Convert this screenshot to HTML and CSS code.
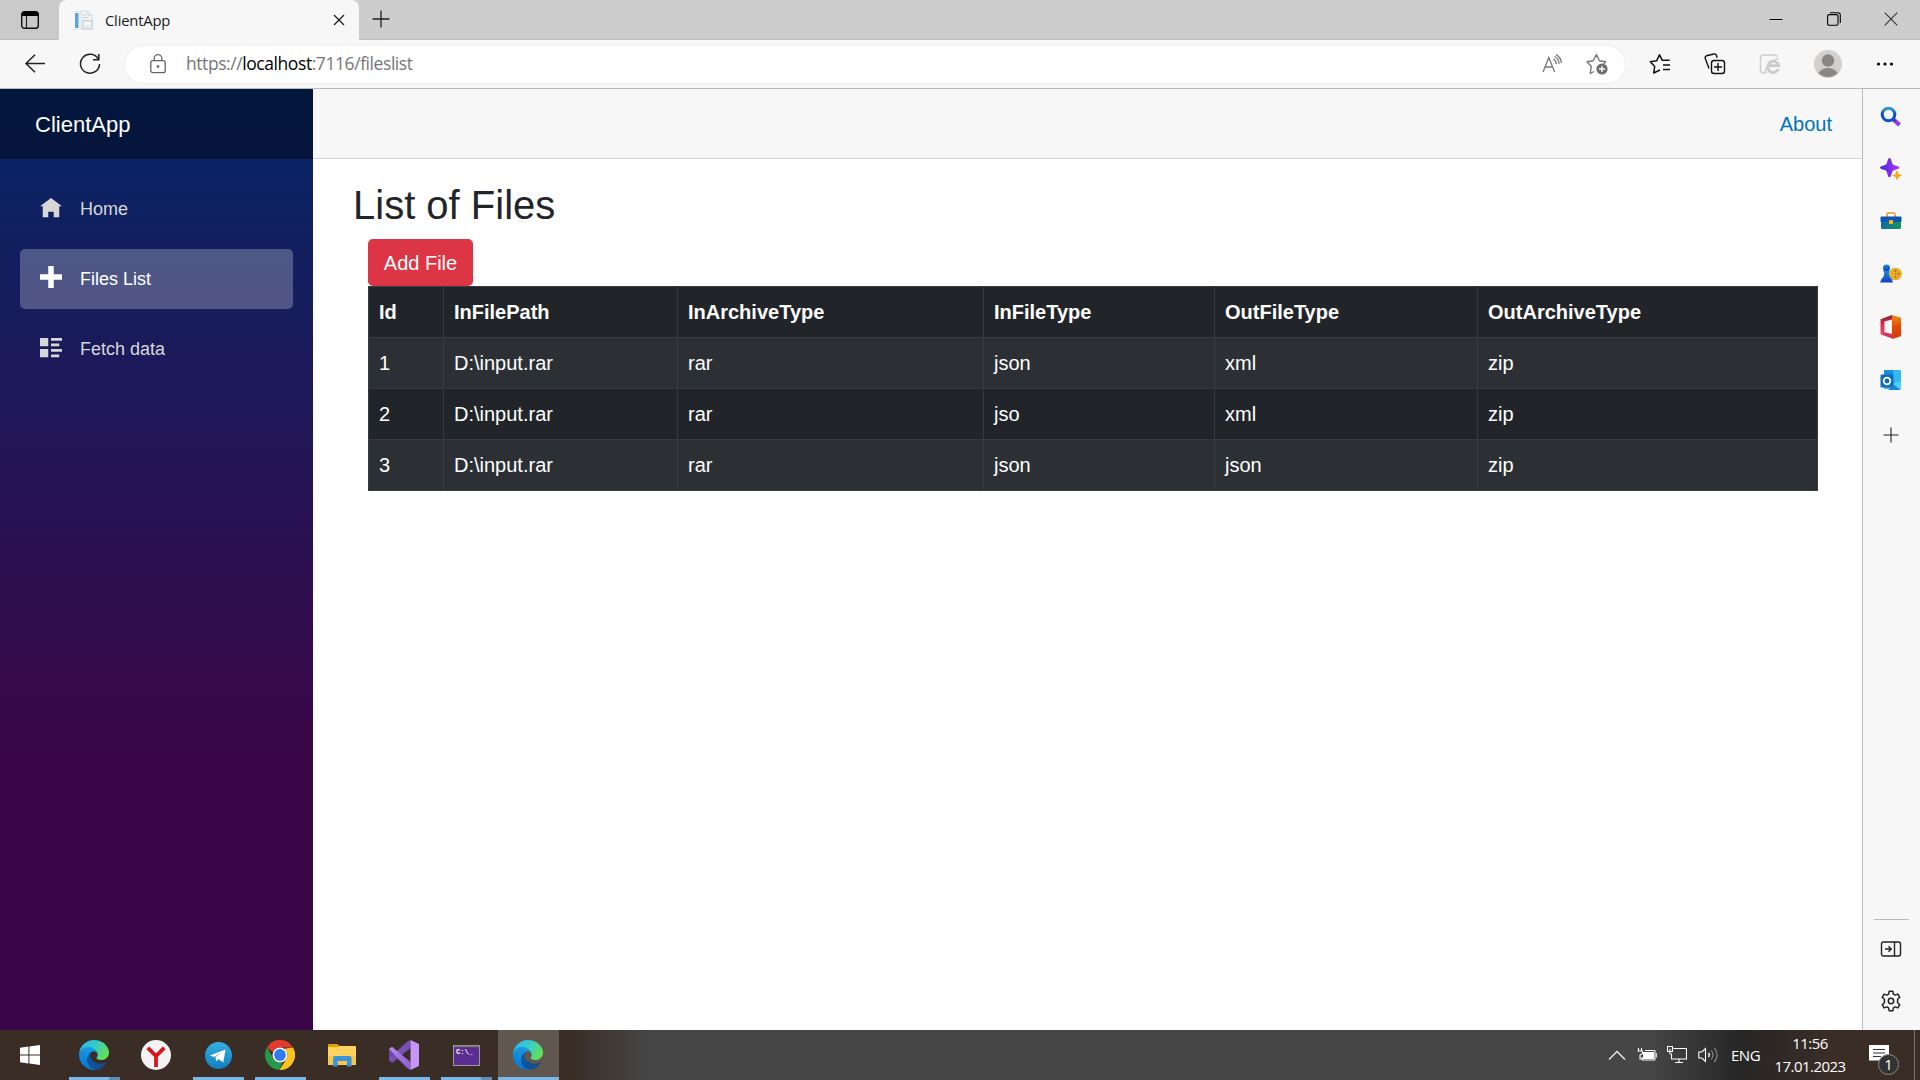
FILE: index.html
```html
<!DOCTYPE html>
<html lang="en">
<head>
<meta charset="utf-8">
<title>ClientApp</title>
<link rel="stylesheet" href="styles.css">
</head>
<body>
<svg class="defs" width="0" height="0" aria-hidden="true">
  <defs>
    <linearGradient id="edge-a" x1="0" y1="0" x2="1" y2="0"><stop offset="0" stop-color="#0c59a4"/><stop offset="1" stop-color="#114a8b"/></linearGradient>
    <linearGradient id="edge-b" x1=".6" y1="0" x2=".3" y2="1"><stop offset="0" stop-color="#1b9de2"/><stop offset=".5" stop-color="#1389d8"/><stop offset="1" stop-color="#0078d4"/></linearGradient>
    <linearGradient id="edge-c" x1="0" y1=".2" x2="1" y2=".6"><stop offset="0" stop-color="#2fb4ee"/><stop offset=".5" stop-color="#36cdc8"/><stop offset="1" stop-color="#66e04e"/></linearGradient>
    <linearGradient id="glass" x1="0" y1="0" x2="0" y2="1"><stop offset="0" stop-color="#2a9bd6"/><stop offset=".5" stop-color="#0b4cc4"/><stop offset="1" stop-color="#0a52d8"/></linearGradient>
    <linearGradient id="spark" x1="0" y1="0" x2="1" y2="0"><stop offset="0" stop-color="#3a36d8"/><stop offset=".6" stop-color="#8a2df0"/><stop offset="1" stop-color="#b03cf5"/></linearGradient>
    <linearGradient id="box" x1="0" y1="0" x2="1" y2="0"><stop offset="0" stop-color="#0d6aa8"/><stop offset="1" stop-color="#16965c"/></linearGradient>
    <linearGradient id="pawn" x1="0" y1="0" x2="0" y2="1"><stop offset="0" stop-color="#1c8ad0"/><stop offset="1" stop-color="#1141c4"/></linearGradient>
    <linearGradient id="office-l" x1="0" y1="0" x2="0" y2="1"><stop offset="0" stop-color="#8a1f2e"/><stop offset=".5" stop-color="#d9305a"/><stop offset="1" stop-color="#f0456a"/></linearGradient>
    <linearGradient id="office-r" x1="0" y1="0" x2="0" y2="1"><stop offset="0" stop-color="#f0910a"/><stop offset=".5" stop-color="#e04a08"/><stop offset="1" stop-color="#d43a06"/></linearGradient>
    <linearGradient id="tg" x1="0" y1="0" x2="0" y2="1"><stop offset="0" stop-color="#37aee2"/><stop offset="1" stop-color="#0f80c0"/></linearGradient>
    <linearGradient id="vs" x1="0" y1="0" x2="1" y2="0"><stop offset="0" stop-color="#b98be8"/><stop offset="1" stop-color="#8b5fd0"/></linearGradient>
    <symbol id="edge" viewBox="0 0 256 256">
      <g transform="translate(-4.63 -4.92)">
        <path fill="url(#edge-a)" d="M235.68 195.46a93.73 93.73 0 0 1-10.54 4.71 101.87 101.87 0 0 1-35.9 6.46c-47.32 0-88.54-32.55-88.54-74.32A31.48 31.48 0 0 1 117.13 105c-42.8 1.8-53.8 46.4-53.8 72.53 0 73.88 68.09 81.37 82.76 81.37 7.91 0 19.84-2.3 27-4.56l1.31-.44a128.34 128.34 0 0 0 66.6-52.8 4 4 0 0 0-5.32-5.64z"/>
        <path fill="url(#edge-b)" d="M110.34 246.34A79.2 79.2 0 0 1 87.6 225a80.72 80.72 0 0 1 29.53-120c3.12-1.47 8.45-4.05 15.54-4a32.35 32.35 0 0 1 25.69 13 31.88 31.88 0 0 1 6.36 18.66c0-.21 24.46-79.6-80-79.6-43.9 0-80 41.66-80 78.21a130.15 130.15 0 0 0 12.11 56 128 128 0 0 0 156.38 67.11 75.55 75.55 0 0 1-62.78-8z"/>
        <path fill="url(#edge-c)" d="M156.94 153.78c-.81 1.05-3.3 2.5-3.3 5.66 0 2.61 1.7 5.12 4.72 7.23 14.38 10 41.49 8.68 41.56 8.68a59.56 59.56 0 0 0 30.27-8.35 61.38 61.38 0 0 0 30.43-52.88c.26-22.41-8-37.31-11.34-43.91C228.09 28.76 182.35 4.92 132.61 4.92a128 128 0 0 0-128 126.2c.48-36.54 36.8-66.05 80-66.05 3.5 0 23.46.34 42 10.07 16.34 8.58 24.9 18.94 30.85 29.21 6.18 10.67 7.28 24.15 7.28 29.52s-2.74 13.33-7.8 19.91z"/>
      </g>
    </symbol>
  </defs>
</svg>

<div class="screen">
  <header class="tabstrip">
    <button class="tab-actions" aria-label="Tab actions">
      <svg width="20" height="20" viewBox="0 0 20 20"><rect x="1.7" y="1.7" width="16.6" height="16.6" rx="2.8" fill="none" stroke="#111" stroke-width="1.4"/><path d="M1.5 6V4.2A3 3 0 0 1 4.5 1.300h11a3 3 0 0 1 3 3V6z" fill="#000"/><path d="M6.500 6v12" stroke="#222" stroke-width="1.2"/></svg>
    </button>
    <div class="tab">
      <svg class="favicon" width="21" height="21" viewBox="0 0 21 21"><rect x="2" y="3" width="3.500" height="15" fill="#5ba5d8"/><path d="M0.500 1.500h5M.5 19.500h5" stroke="#d7e4ec"/><path d="M7 1h8l4 3.500V19H7z" fill="#f1f3f5" stroke="#d8dde1"/><path d="M15 1v4h4" fill="#fff" stroke="#c4ccd2"/><path d="M8.500 5h5M8.500 7.500h7" stroke="#cdd5da"/><rect x="9.500" y="10.500" width="10" height="8.500" fill="#e4e9ec" stroke="#c8d0d6"/><path d="M11 13.500h7" stroke="#f8fafb" stroke-width="2"/></svg>
      <span class="tab-title">ClientApp</span>
      <svg class="tab-close" width="12" height="12" viewBox="0 0 12 12"><path d="M1 1l10 10M11 1L1 11" stroke="#222" stroke-width="1.400"/></svg>
    </div>
    <svg class="new-tab" width="18" height="18" viewBox="0 0 18 18"><path d="M9 .5v17M.5 9h17" stroke="#222" stroke-width="1.300"/></svg>
    <div class="window-controls">
      <svg width="14" height="14" viewBox="0 0 14 14"><path d="M.5 7.500h13" stroke="#000"/></svg>
      <svg width="14" height="14" viewBox="0 0 14 14"><rect x=".6" y="2.600" width="10.400" height="10.600" rx="1.500" fill="none" stroke="#000" stroke-width="1.100"/><path d="M3 .7h8a2.300 2.300 0 0 1 2.300 2.300v8" fill="none" stroke="#000" stroke-width="1.100"/></svg>
      <svg width="14" height="14" viewBox="0 0 14 14"><path d="M.7.7l12.600 12.600M13.300.7L.7 13.300" stroke="#333" stroke-width="1.100"/></svg>
    </div>
  </header>

  <div class="toolbar">
    <svg class="back" width="22" height="20" viewBox="0 0 22 20"><path d="M21 9.500H2M11 .8L2 9.500l9 8.700" fill="none" stroke="#222" stroke-width="1.500"/></svg>
    <svg class="reload" width="22" height="22" viewBox="0 0 22 22"><path d="M19.500 6.500A9.500 9.500 0 1 0 20.500 11M19.800 1v5.800H14" fill="none" stroke="#222" stroke-width="1.500"/></svg>
    <div class="address">
      <svg class="lock" width="16" height="20" viewBox="0 0 16 20"><rect x=".8" y="6.700" width="14.400" height="12" rx="2" fill="none" stroke="#666" stroke-width="1.300"/><path d="M4.200 6.700V4.500a3.800 3.800 0 0 1 7.600 0v2.200" fill="none" stroke="#666" stroke-width="1.300"/><circle cx="8" cy="12.500" r="1.300" fill="#555"/></svg>
      <span class="url">https://<b>localhost</b>:7116/fileslist</span>
      <svg class="read" width="20" height="20" viewBox="0 0 20 20" fill="none" stroke="#777" stroke-width="1.300"><path d="M1 18L6.800 3.500 12.600 18M3 13h7.600M11.500 5a6 6 0 0 1 2.800 5M12.500 2.500A8 8 0 0 1 17 10M14 .6A10 10 0 0 1 19.300 9"/></svg>
      <svg class="fav" width="24" height="22" viewBox="0 0 24 22"><path d="M8 18.500l-3.800 2L5.300 13.200.9 8.800l6.300-1L10.400 1.600l3 6.200 6.200 1-2 2.200" fill="none" stroke="#777" stroke-width="1.400" stroke-linejoin="round"/><circle cx="16" cy="16" r="5.600" fill="#6f6f6f"/><path d="M16 13v6M13 16h6" stroke="#fff" stroke-width="1.300"/></svg>
    </div>
    <div class="tools">
      <svg width="22" height="22" viewBox="0 0 22 22" fill="none" stroke="#111" stroke-width="1.500" stroke-linejoin="round"><path d="M11 17l-6.300 3L5.700 13.500 1.300 8.800l6.300-1L10.500 1.800l2.800 5.500h7.400M14 12h7M14 16.500h7"/></svg>
      <svg width="22" height="22" viewBox="0 0 22 22" fill="none" stroke="#111" stroke-width="1.400" stroke-linejoin="round"><rect x="7.500" y="7.500" width="13" height="13" rx="2.500"/><path d="M14 10v8M10 14h8M5 15.500L1.200 5.200a2 2 0 0 1 1.200-2.400L10 1a2 2 0 0 1 2.400 1.300l.8 2.400"/></svg>
      <svg width="22" height="22" viewBox="0 0 22 22"><path d="M6 20H4a2.500 2.500 0 0 1-2.500-2.500v-13A2.500 2.500 0 0 1 4 2h12a2.500 2.500 0 0 1 2.500 2" fill="none" stroke="#d0d0d0" stroke-width="1.500"/><path d="M19.500 16a5.600 5.600 0 1 1 .3-3.300H9.500" fill="none" stroke="#cbcbcb" stroke-width="2.800"/><path d="M8 19.500c-2 .8-2.500-1 0-5 3-5 9-9 11.500-8.500" fill="none" stroke="#d0d0d0" stroke-width="1.500"/></svg>
      <svg width="28" height="28" viewBox="0 0 28 28"><clipPath id="av"><circle cx="14" cy="14" r="13"/></clipPath><circle cx="14" cy="14" r="14" fill="#d2d0ce"/><circle cx="14" cy="10.500" r="6.200" fill="#8a8683"/><ellipse cx="14" cy="26" rx="10" ry="8" fill="#8a8683" clip-path="url(#av)"/></svg>
      <svg width="18" height="6" viewBox="0 0 18 6"><circle cx="2.500" cy="3" r="1.600"/><circle cx="9" cy="3" r="1.600"/><circle cx="15.500" cy="3" r="1.600"/></svg>
    </div>
  </div>

  <div class="viewport">
    <div class="page">
      <aside class="sidebar">
        <div class="brand">ClientApp</div>
        <nav class="nav">
          <a class="nav-item"><svg width="22" height="22" viewBox="0 0 8 8"><path fill="currentColor" d="M4 0L0 3h1v4h2V5h2v2h2V3.010l1 0z"/></svg>Home</a>
          <a class="nav-item active"><svg class="plus" width="22" height="22" viewBox="0 0 8 8"><path fill="currentColor" d="M3 0v3H0v2h3v3h2V5h3V3H5V0z"/></svg>Files List</a>
          <a class="nav-item"><svg width="22" height="22" viewBox="0 0 8 8"><path fill="currentColor" d="M0 0v3h3V0zM4 0v1h4V0zM4 2v1h3V2zM0 4v3h3V4zM4 4v1h4V4zM4 6v1h3V6z"/></svg>Fetch data</a>
        </nav>
      </aside>
      <main class="main">
        <div class="top-row"><a>About</a></div>
        <article class="content">
          <h1>List of Files</h1>
          <div class="files">
            <button class="btn">Add File</button>
            <table class="table">
              <colgroup><col class="c1"><col class="c2"><col class="c3"><col class="c4"><col class="c5"><col class="c6"></colgroup>
              <thead><tr><th>Id</th><th>InFilePath</th><th>InArchiveType</th><th>InFileType</th><th>OutFileType</th><th>OutArchiveType</th></tr></thead>
              <tbody>
                <tr><td>1</td><td>D:\input.rar</td><td>rar</td><td>json</td><td>xml</td><td>zip</td></tr>
                <tr><td>2</td><td>D:\input.rar</td><td>rar</td><td>jso</td><td>xml</td><td>zip</td></tr>
                <tr><td>3</td><td>D:\input.rar</td><td>rar</td><td>json</td><td>json</td><td>zip</td></tr>
              </tbody>
            </table>
          </div>
        </article>
      </main>
    </div>
    <aside class="edgebar">
      <div class="edge-icons">
        <svg width="22" height="22" viewBox="0 0 22 22"><path d="M13.500 13.500l6 5.500" stroke="#8a3df0" stroke-width="4.200"/><path d="M13 13l2.500 2.200" stroke="#5a3a8a" stroke-width="3"/><circle cx="8.500" cy="8.500" r="6.300" fill="#f0f7ff" stroke="url(#glass)" stroke-width="3"/></svg>
        <svg width="22" height="22" viewBox="0 0 22 22"><path d="M9.500 0c1.200 0 1.600 1.500 2.300 4 .6 2.300 1.200 2.800 3.500 3.400 2.800.8 4.200 1.200 4.200 2.200s-1.500 1.500-4.200 2.200c-2.300.6-2.900 1.200-3.500 3.400-.7 2.700-1.100 4-2.300 4s-1.600-1.300-2.300-4c-.6-2.200-1.200-2.800-3.500-3.400C1 11 0 10.600 0 9.600s1-1.400 3.700-2.200C6 6.800 6.600 6.300 7.200 4c.7-2.500 1.100-4 2.300-4z" fill="url(#spark)"/><path d="M17 12.500c.9 0 .9 2.600 1.700 3.500.8.800 3.100.5 3.100 1.500s-2.300.7-3.100 1.500c-.8.900-.8 3-1.700 3s-.9-2.100-1.700-3c-.8-.8-3-.5-3-1.500s2.200-.7 3-1.500c.8-.9.8-3.500 1.700-3.500z" fill="#f0ac12"/></svg>
        <svg width="22" height="22" viewBox="0 0 22 22"><path d="M7 7V4.500A1.500 1.500 0 0 1 8.500 3h5A1.500 1.500 0 0 1 15 4.500V7" fill="none" stroke="#e0a020" stroke-width="1.600"/><rect x="1" y="8" width="20" height="11" rx="1.500" fill="url(#box)"/><rect x=".5" y="6.500" width="21" height="5.500" rx="1" fill="#0e55b4"/><rect x="9" y="10" width="4" height="4" rx=".8" fill="#ffb81c"/></svg>
        <svg width="22" height="22" viewBox="0 0 22 22"><circle cx="15.500" cy="11" r="6.300" fill="#e9ab2c"/><g fill="#a66c08"><circle cx="15.500" cy="8" r="1"/><circle cx="18.500" cy="11" r="1"/><circle cx="15.500" cy="14" r="1"/><circle cx="15.500" cy="11" r=".8"/></g><circle cx="6.500" cy="5" r="3.500" fill="url(#pawn)"/><path d="M3 8h7l-1 1.500c0 3 .8 5 2.700 6.500l1.300 3.500H0L1.500 16c2-1.500 2.700-3.500 2.700-6.500z" fill="url(#pawn)"/></svg>
        <svg width="22" height="24" viewBox="0 0 22 24"><path d="M12 0L.5 4.200v15l4-1.700V6.500L13 4.200z" fill="url(#office-l)"/><path d="M.5 19.200l4-2 8.500 2v4.600z" fill="#d9305a"/><path d="M12 0l9 2.700v18.500L12 24V0z" fill="url(#office-r)"/></svg>
        <svg width="22" height="22" viewBox="0 0 22 22"><rect x="4" y="1" width="17" height="19" rx="1" fill="#35b8f1"/><path d="M4 1h9v5H4z" fill="#1490df"/><path d="M8 21l13-9v7a2 2 0 0 1-2 2z" fill="#1687d6"/><path d="M13 15l8 6V12z" fill="#50d0ff"/><rect x=".5" y="5.500" width="13" height="13" rx="1.200" fill="#0f6cbd"/><circle cx="7" cy="12" r="3.300" fill="none" stroke="#fff" stroke-width="1.800"/></svg>
        <svg width="16" height="16" viewBox="0 0 16 16"><path d="M8 .5v15M.5 8h15" stroke="#222" stroke-width="1.100"/></svg>
      </div>
      <div class="edge-foot">
        <svg width="22" height="18" viewBox="0 0 22 18"><rect x="1.500" y="2" width="19" height="14" rx="2" fill="none" stroke="#222" stroke-width="1.400"/><path d="M14.500 2v14M5 9h6M8.500 6.300L11.200 9l-2.700 2.700" fill="none" stroke="#222" stroke-width="1.400"/></svg>
        <svg width="22" height="22" viewBox="0 0 22 22" fill="none" stroke="#222" stroke-width="1.500" stroke-linejoin="round"><circle cx="11" cy="11" r="2.700"/><path d="M9.200 1.200h3.600l.6 2.900 1.700 1 2.800-1 1.900 3.200-2.200 2v3.400l2.200 2-1.900 3.200-2.800-1-1.700 1-.6 2.900H9.200l-.6-2.900-1.700-1-2.800 1-1.900-3.200 2.200-2V9.300l-2.200-2 1.900-3.200 2.800 1 1.700-1z"/></svg>
      </div>
    </aside>
  </div>

  <footer class="taskbar">
    <div class="start"><svg width="20" height="20" viewBox="0 0 20 20"><path fill="#fff" d="M0 2.700L8.400 1.500v8H0zM9.400 1.400L20 0v9.500H9.400zM0 10.500h8.400v8L0 17.300zM9.400 10.500H20V20L9.400 18.600z"/></svg></div>
    <div class="app run multi"><svg width="30" height="30"><use href="#edge"/></svg></div>
    <div class="app"><svg width="30" height="30" viewBox="0 0 30 30"><circle cx="15" cy="15" r="15" fill="#f3f3f3"/><path d="M6.800 7.800L15 16l8.200-8.200M15 15v12" fill="none" stroke="#d8141c" stroke-width="3.800"/></svg></div>
    <div class="app run"><svg width="27" height="27" viewBox="0 0 27 27"><circle cx="13.500" cy="13.500" r="13.500" fill="url(#tg)"/><path d="M5 13.600L20.500 7.500 18.300 20.500 13.500 17l-2.300 2.500-.8-4.500 6.600-5-8 5z" fill="#fff"/></svg></div>
    <div class="app run"><svg width="30" height="30" viewBox="0 0 30 30"><path d="M2 7.500a15 15 0 0 1 26 0H15a7.500 7.500 0 0 0-7 4.700z" fill="#e33b2e"/><path d="M28 7.500A15 15 0 0 1 14.500 30l7-11.200A7.500 7.500 0 0 0 19 8.700L28 7.500z" fill="#fcc31e"/><path d="M2 7.500l6.500 11.250a7.500 7.500 0 0 0 9 3.400L14.500 30A15 15 0 0 1 2 7.500z" fill="#259b48"/><circle cx="15" cy="15" r="7.500" fill="#fff"/><circle cx="15" cy="15" r="5.900" fill="#2f7bee"/></svg></div>
    <div class="app"><svg width="30" height="24" viewBox="0 0 30 24"><path d="M1 2a1 1 0 0 1 1-1h8l3 2v4H1z" fill="#e3a008"/><path d="M1 4h9.500L13 3h15a1 1 0 0 1 1 1v18H1z" fill="#ffd35c"/><path d="M1 13h28v8.500H1z" fill="#fbc744"/><path d="M6 23.500V15a2 2 0 0 1 2-2h14.500a2 2 0 0 1 2 2v8.500H20V18h-9.300v5.500z" fill="#3a94d8"/></svg></div>
    <div class="app run"><svg width="30" height="30" viewBox="0 0 30 30"><path d="M0 9.500L3 7l18.500 16v7l-3-1.500L3.500 14v7.500L0 20z" fill="#6b46ad"/><path d="M0 20l3 3L21.500 8V0l-3 1.500L0 18z" fill="#7650b4"/><path d="M3 6.800L0 9l18.500 18.800L21.500 30V22z" fill="url(#vs)"/><path d="M21.500 0L30 4v22l-8.500 4z" fill="#c794fa"/></svg></div>
    <div class="app run multi"><svg width="27" height="21" viewBox="0 0 27 21"><rect x=".5" y=".5" width="26" height="20" fill="#5c2d91" stroke="#999" /><path d="M1 1.500h25" stroke="#777" stroke-width="1.500"/><text x="3" y="9" class="prompt">C:\_</text></svg></div>
    <div class="app run current"><svg width="30" height="30"><use href="#edge"/></svg></div>

    <div class="tray">
      <svg width="18" height="12" viewBox="0 0 18 12"><path d="M1 10.500l8-8 8 8" fill="none" stroke="#eee" stroke-width="1.400"/></svg>
      <svg width="20" height="16" viewBox="0 0 20 16"><path d="M1.500 1v3M4.500 1v3M.5 4h5v2.500L3 8v4h3" fill="none" stroke="#fff" stroke-width="1.100"/><path d="M8 3.500h10v9.500H5v-3" fill="none" stroke="#fff"/><rect x="6" y="5" width="11" height="7" fill="#fff"/><path d="M19.300 6v4.500" stroke="#fff"/></svg>
      <svg width="20" height="18" viewBox="0 0 20 18"><path d="M6.500 2.500h13v10.500h-15V7.500M12 13v3M8 16.500h8M.5.5h5v5h-5zM3 3v5.500" fill="none" stroke="#fff" stroke-width="1.100"/></svg>
      <svg width="21" height="20" viewBox="0 0 21 20" fill="none"><path d="M.8 7h3L7.500 3.500v13L3.800 13h-3z" stroke="#fff" stroke-width="1.100"/><path d="M10.500 7.800c1 1.300 1 3 0 4.400" stroke="#fff" stroke-width="1.300"/><path d="M13.300 5.500c2.300 3 2.300 6 0 9M16.300 2.800c3.500 4.500 3.500 9.800 0 14.300" stroke="#858585" stroke-width="1.200"/></svg>
      <span class="lang">ENG</span>
      <div class="clock"><span>11:56</span><span>17.01.2023</span></div>
      <div class="notice">
        <svg width="20" height="20" viewBox="0 0 20 20"><path d="M0 0h20v15.500h-5L10.500 20v-4.500H0z" fill="#fff"/><path d="M4 4.500h12M4 8h12M4 11.500h8" stroke="#333"/></svg>
        <span class="count">1</span>
      </div>
      <div class="peek"></div>
    </div>
  </footer>
</div>
</body>
</html>
```
FILE: styles.css
```css
* { box-sizing: border-box; }
body { margin: 0; overflow: hidden; font-family: "Liberation Sans", Arial, sans-serif; font-size: 20px; }
svg { display: block; flex: none; }
.defs { position: absolute; }
button { font: inherit; border: 0; padding: 0; }
.screen { width: 1920px; height: 1080px; display: flex; flex-direction: column; }

/* Tab strip */
.tabstrip { height: 40px; display: flex; background: #cdcdcd; font-family: "Open Sans", sans-serif; border-bottom: 1px solid #bebebe; }
.tab-actions { width: 59px; height: 39px; display: flex; align-items: center; padding-left: 20px; background: #cacaca; border-radius: 0 0 6px 0; }
.tab { width: 300px; height: 40px; display: flex; align-items: center; background: #f7f7f7; border-radius: 8px 8px 0 0; padding: 0 14px 0 14px; }
.tab-title { margin: -1px 0 0 11px; font-size: 14.800px; letter-spacing: -.2px; color: #1a1a1a; flex: 1; }
.new-tab { margin: 10px 0 0 13px; }
.window-controls { margin-left: auto; display: flex; gap: 43.500px; padding: 12px 22px 0 0; }

/* Toolbar */
.toolbar { height: 49px; display: flex; align-items: center; background: #f7f7f7; border-bottom: 1px solid #bbb; padding-left: 24px; }
.reload { margin-left: 33px; }
.address { width: 1500px; height: 37px; margin-left: 24px; display: flex; align-items: center; background: #fff; border-radius: 19px; padding: 0 15px 0 25px; box-shadow: 0 0 3px rgba(0, 0, 0, .08); }
.url { margin: -2px 0 0 20px; flex: 1; font-family: "Open Sans", sans-serif; font-size: 17.500px; letter-spacing: -.43px; color: #767676; }
.url b { font-weight: 400; color: #000; }
.fav { margin-left: 24px; }
.tools { display: flex; align-items: center; margin-left: 24px; }
.tools svg + svg { margin-left: 33px; }
.tools svg:nth-child(4) { margin-left: 33px; }
.tools svg:nth-child(5) { margin-left: 34px; }

/* Web page */
.viewport { height: 941px; display: flex; }
.page { width: 1862px; flex: none; display: flex; background: #fff; }
.sidebar { width: 313px; flex: none; background: linear-gradient(180deg, rgb(5, 39, 103) 0%, #3a0647 70%); }
.brand { height: 70px; display: flex; align-items: center; padding: 1px 0 0 35px; font-size: 22px; color: #fff; background: rgba(0, 0, 0, .4); }
.nav { padding: 20px; display: flex; flex-direction: column; gap: 10px; }
.nav-item { height: 60px; display: flex; align-items: center; padding-left: 20px; gap: 18px; font-size: 18px; color: #d7d7d7; border-radius: 5px; }
.nav-item.active { color: #fff; background: rgba(255, 255, 255, .25); }
.plus { margin-bottom: 4px; }
.main { flex: 1; min-width: 0; }
.top-row { height: 70px; display: flex; align-items: center; justify-content: flex-end; padding: 2px 30px 0 0; background: #f7f7f7; border-bottom: 1px solid #d6d5d5; color: #0071c1; }
.content { padding: 22px 40px 0 40px; color: #212529; }
h1 { margin: 0 0 10px; font-weight: 400; font-size: 40px; line-height: 48px; }
.files { padding-left: 15px; }
.btn { display: block; width: 105px; height: 47px; padding: 1px 0 0; background: #dc3545; color: #fff; border-radius: 5px; }
.table { width: 1449px; height: 205px; table-layout: fixed; border-collapse: collapse; background: #212529; color: #fff; }
.table th, .table td { height: 51px; padding: 0 0 0 10px; text-align: left; border: 1px solid #373b3e; }
.table tbody tr:nth-child(odd) { background: #2c3034; }
.c1 { width: 75px; } .c2 { width: 234px; } .c3 { width: 306px; } .c4 { width: 231px; } .c5 { width: 263px; } .c6 { width: 340px; }

/* Browser side panel */
.edgebar { width: 58px; border-left: 1px solid #bbb; background: #f7f7f7; display: flex; flex-direction: column; justify-content: space-between; align-items: center; padding-right: 1px; }
.edge-icons { display: flex; flex-direction: column; align-items: center; gap: 30.200px; padding-top: 17px; }
.edge-icons svg:last-child { margin-top: 6px; }
.edge-foot { width: 35px; height: 111px; display: flex; flex-direction: column; align-items: center; gap: 32px; border-top: 1px solid #bbb; padding-top: 20px; }

/* Taskbar */
.taskbar { height: 50px; display: flex; color: #fff; background: linear-gradient(90deg, #3a2d26 0, #3a2d26 570px, #464646 650px, #464646 1650px, #262626 1740px, #3a2d26 1830px, #3a2d26 100%); font-family: "Open Sans", sans-serif; }
.start { width: 63px; display: flex; align-items: center; padding-left: 20px; }
.app { width: 62px; display: flex; align-items: center; justify-content: center; position: relative; }
.run::after { content: ""; position: absolute; left: 6px; right: 5px; bottom: 0; height: 3px; background: #76b9ed; }
.multi::after { background: linear-gradient(90deg, #76b9ed 40px, #5e8db5 40px); }
.current { background: linear-gradient(90deg, transparent 1px, #62574f 1px); }
.current::after { left: 1px; right: 0; }
.prompt { font: bold 7px "Liberation Mono", monospace; fill: #fff; }
.tray { margin-left: auto; display: flex; align-items: center; }
.tray > svg { margin-right: 10.500px; }
.lang { width: 31px; margin-left: 2px; font-size: 15px; letter-spacing: -.5px; }
.clock { width: 96px; display: flex; flex-direction: column; align-items: center; font-size: 15px; line-height: 23px; letter-spacing: -.55px; margin-left: 0; }
.notice { position: relative; margin-left: 11px; width: 20px; }
.count { position: absolute; left: 9px; top: 9px; width: 21px; height: 21px; border: 1.500px solid #8c8c8c; border-radius: 50%; background: #333; font-size: 15px; line-height: 19px; text-align: center; }
.peek { width: 6px; align-self: stretch; margin-left: 25px; border-left: 1px solid #80776f; }
```
